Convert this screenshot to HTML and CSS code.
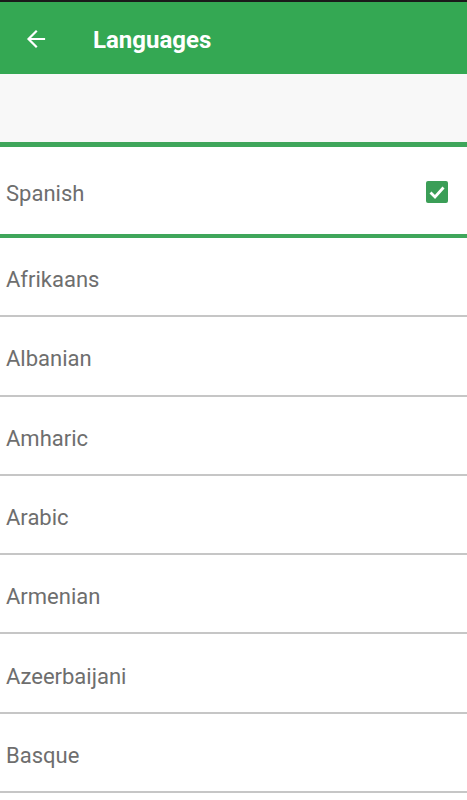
FILE: index.html
```html
<!DOCTYPE html>
<html>
<head>
<meta charset="utf-8">
<link rel="stylesheet" href="styles.css">
</head>
<body>
<div class="status"></div>
<header class="appbar">
  <span class="back">
    <svg width="24" height="24" viewBox="0 0 24 24"><path d="M20 12H5M12 4.5L4.5 12L12 19.5" fill="none" stroke="#fff" stroke-width="2.2" stroke-linecap="square"/></svg>
  </span>
  <h1 class="title">Languages</h1>
</header>
<div class="band"></div>
<div class="selected">
  <span class="label">Spanish</span>
  <span class="check">
    <svg width="22" height="22" viewBox="0 0 22 22"><rect width="22" height="22" rx="2" fill="#3b9e57"/><path d="M4.5 11.5L9 16L17.5 6.5" fill="none" stroke="#fff" stroke-width="2.8"/></svg>
  </span>
</div>
<ul class="list">
  <li class="row">Afrikaans</li>
  <li class="row">Albanian</li>
  <li class="row">Amharic</li>
  <li class="row">Arabic</li>
  <li class="row">Armenian</li>
  <li class="row">Azeerbaijani</li>
  <li class="row">Basque</li>
  <li class="row empty"></li>
</ul>
</body>
</html>
```
FILE: styles.css
```css
html, body {
  margin: 0;
  padding: 0;
  background: #ffffff;
  font-family: Roboto, "Noto Sans", sans-serif;
  overflow: hidden;
}
.status {
  height: 2px;
  background: #1a1a1a;
}
.appbar {
  height: 72px;
  background: #34a853;
  display: flex;
  align-items: center;
}
.back {
  width: 24px;
  height: 24px;
  margin: 2px 0 0 24px;
  display: flex;
}
.title {
  margin: 4px 0 0 45px;
  color: #ffffff;
  font-size: 24px;
  font-weight: 700;
}
.band {
  height: 68px;
  background: #f8f8f8;
}
.selected {
  height: 87px;
  border-top: 5px solid #3fa65b;
  border-bottom: 4px solid #3fa65b;
  background: #ffffff;
  display: flex;
  align-items: center;
  justify-content: space-between;
  padding: 0 19px 0 6px;
}
.label {
  font-size: 22px;
  color: #6e6e6e;
  margin-top: 5px;
}
.check {
  display: flex;
  margin-top: 3px;
}
.list {
  list-style: none;
  margin: 0;
  padding: 0;
}
.row {
  border-bottom: 2px solid #c6c6c6;
  display: flex;
  align-items: center;
  padding: 6px 0 0 6px;
  height: 71.3px;
  font-size: 22px;
  color: #6e6e6e;
}
```
